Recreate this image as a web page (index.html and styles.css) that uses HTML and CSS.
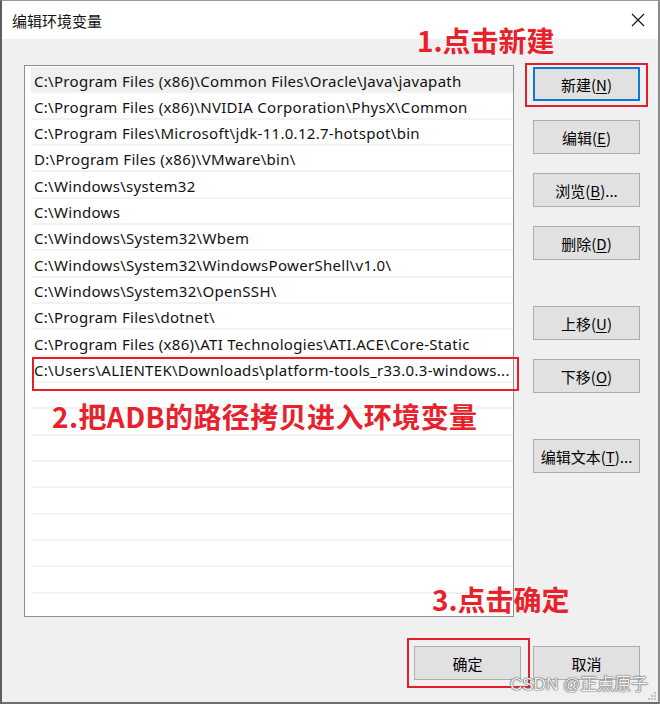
FILE: index.html
```html
<!DOCTYPE html>
<html lang="zh-CN">
<head>
<meta charset="utf-8">
<title>编辑环境变量</title>
<link rel="stylesheet" href="styles.css">
</head>
<body>
<div class="window">
  <div class="titlebar">
    <span class="title">编辑环境变量</span>
    <svg class="close" width="14" height="14" viewBox="0 0 14 14"><path d="M1 1 L13 13 M13 1 L1 13" stroke="#111" stroke-width="1.1" fill="none"/></svg>
  </div>
  <div class="body">
    <div class="main">
      <div class="list">
        <div class="row selected">C:\Program Files (x86)\Common Files\Oracle\Java\javapath</div>
        <div class="row">C:\Program Files (x86)\NVIDIA Corporation\PhysX\Common</div>
        <div class="row">C:\Program Files\Microsoft\jdk-11.0.12.7-hotspot\bin</div>
        <div class="row">D:\Program Files (x86)\VMware\bin\</div>
        <div class="row">C:\Windows\system32</div>
        <div class="row">C:\Windows</div>
        <div class="row">C:\Windows\System32\Wbem</div>
        <div class="row">C:\Windows\System32\WindowsPowerShell\v1.0\</div>
        <div class="row">C:\Windows\System32\OpenSSH\</div>
        <div class="row">C:\Program Files\dotnet\</div>
        <div class="row">C:\Program Files (x86)\ATI Technologies\ATI.ACE\Core-Static</div>
        <div class="row">C:\Users\ALIENTEK\Downloads\platform-tools_r33.0.3-windows...</div>
        <div class="row"></div>
        <div class="row"></div>
        <div class="row"></div>
        <div class="row"></div>
        <div class="row"></div>
        <div class="row"></div>
        <div class="row"></div>
        <div class="row"></div>
        <div class="row"></div>
      </div>
      <div class="side">
        <div class="group">
          <button class="btn default">新建(<u>N</u>)</button>
          <button class="btn">编辑(<u>E</u>)</button>
          <button class="btn">浏览(<u>B</u>)...</button>
          <button class="btn">删除(<u>D</u>)</button>
        </div>
        <div class="group">
          <button class="btn">上移(<u>U</u>)</button>
          <button class="btn">下移(<u>O</u>)</button>
        </div>
        <div class="group">
          <button class="btn">编辑文本(<u>T</u>)...</button>
        </div>
      </div>
    </div>
    <div class="footer">
      <button class="btn">确定</button>
      <button class="btn">取消</button>
    </div>
  </div>

  <div class="mark box-new"></div>
  <div class="mark box-row"></div>
  <div class="mark box-ok"></div>
  <div class="note note-1">1.点击新建</div>
  <div class="note note-2">2.把ADB的路径拷贝进入环境变量</div>
  <div class="note note-3">3.点击确定</div>
  <div class="watermark">CSDN @正点原子</div>
  <svg class="grip" width="10" height="10" viewBox="0 0 10 10">
    <rect x="8" y="2" width="2" height="2" fill="#c4c4c4"/>
    <rect x="5" y="5" width="2" height="2" fill="#c4c4c4"/>
    <rect x="8" y="5" width="2" height="2" fill="#c4c4c4"/>
    <rect x="2" y="8" width="2" height="2" fill="#c4c4c4"/>
    <rect x="5" y="8" width="2" height="2" fill="#c4c4c4"/>
    <rect x="8" y="8" width="2" height="2" fill="#c4c4c4"/>
  </svg>
</div>
</body>
</html>
```
FILE: styles.css
```css
* { box-sizing: border-box; }
html, body { margin: 0; padding: 0; }
body {
  width: 660px;
  height: 704px;
  overflow: hidden;
  background: #f0f0f0;
  font-family: "Noto Sans", "Noto Sans CJK SC", sans-serif;
}
.window {
  position: relative;
  width: 660px;
  height: 704px;
  background: #f0f0f0;
  border-top: 1px solid #9a9a9a;
  border-left: 2px solid #5e5e5e;
  border-right: 2px solid #8a8a8a;
  border-bottom: 2px solid #6e6e6e;
  display: flex;
  flex-direction: column;
}
.titlebar {
  height: 38px;
  background: #fff;
  display: flex;
  align-items: center;
  justify-content: space-between;
  padding: 0 13px 0 10px;
  flex: none;
}
.title {
  font-family: "Noto Sans CJK SC", sans-serif;
  font-size: 15px;
  color: #111;
}
.close { display: block; }
.body {
  flex: 1;
  padding: 26px 18px 0 22px;
  display: flex;
  flex-direction: column;
}
.main {
  display: flex;
  gap: 19px;
}
.list {
  width: 490px;
  height: 552px;
  background: #fff;
  border: 1px solid #8a8f98;
  padding: 1px 0 0 6px;
  overflow: hidden;
}
.row {
  height: 26.33px;
  border-bottom: 2px solid #f2f2f2;
  padding: 1.5px 0 0 3px;
  font-size: 15px;
  letter-spacing: 0.3px;
  line-height: 24px;
  color: #111;
  white-space: nowrap;
  overflow: hidden;
}
.row.selected { background: #f0f0f0; }
.side {
  margin-top: 2px;
  display: flex;
  flex-direction: column;
  gap: 46px;
}
.group {
  display: flex;
  flex-direction: column;
  gap: 19px;
}
.btn {
  width: 107px;
  height: 34px;
  background: #e1e1e1;
  border: 1px solid #adadad;
  font-family: "Noto Sans CJK SC", sans-serif;
  font-size: 15px;
  color: #000;
  padding: 0;
  margin: 0;
}
.btn u { text-underline-offset: 2px; }
.btn.default { border: 2px solid #0a78d7; }
.footer {
  margin-top: 29px;
  display: flex;
  justify-content: flex-end;
  gap: 12px;
}
.mark {
  position: absolute;
  border: 2px solid #e51f2a;
}
.box-new { left: 523px; top: 62px; width: 123px; height: 44px; }
.box-row { left: 30px; top: 356px; width: 487px; height: 34px; }
.box-ok { left: 405px; top: 637px; width: 123px; height: 50px; }
.note {
  position: absolute;
  color: #e8222c;
  font-family: "Noto Sans CJK SC", sans-serif;
  font-weight: 700;
  font-size: 28px;
  line-height: 32px;
  white-space: nowrap;
}
.note-1 { left: 415px; top: 23px; }
.note-2 { left: 50px; top: 399px; letter-spacing: 0.4px; }
.note-3 { left: 430px; top: 582px; }
.watermark {
  position: absolute;
  left: 508px;
  top: 674px;
  font-family: "Liberation Sans", "Noto Sans CJK SC", sans-serif;
  font-size: 17px;
  line-height: 20px;
  color: #f4f4f4;
  text-shadow: 0 0 1px #3a3a3a, 0 0 1px #666, 0 0 2px #888;
  white-space: nowrap;
}
.grip { position: absolute; right: 2px; bottom: 2px; }
```
